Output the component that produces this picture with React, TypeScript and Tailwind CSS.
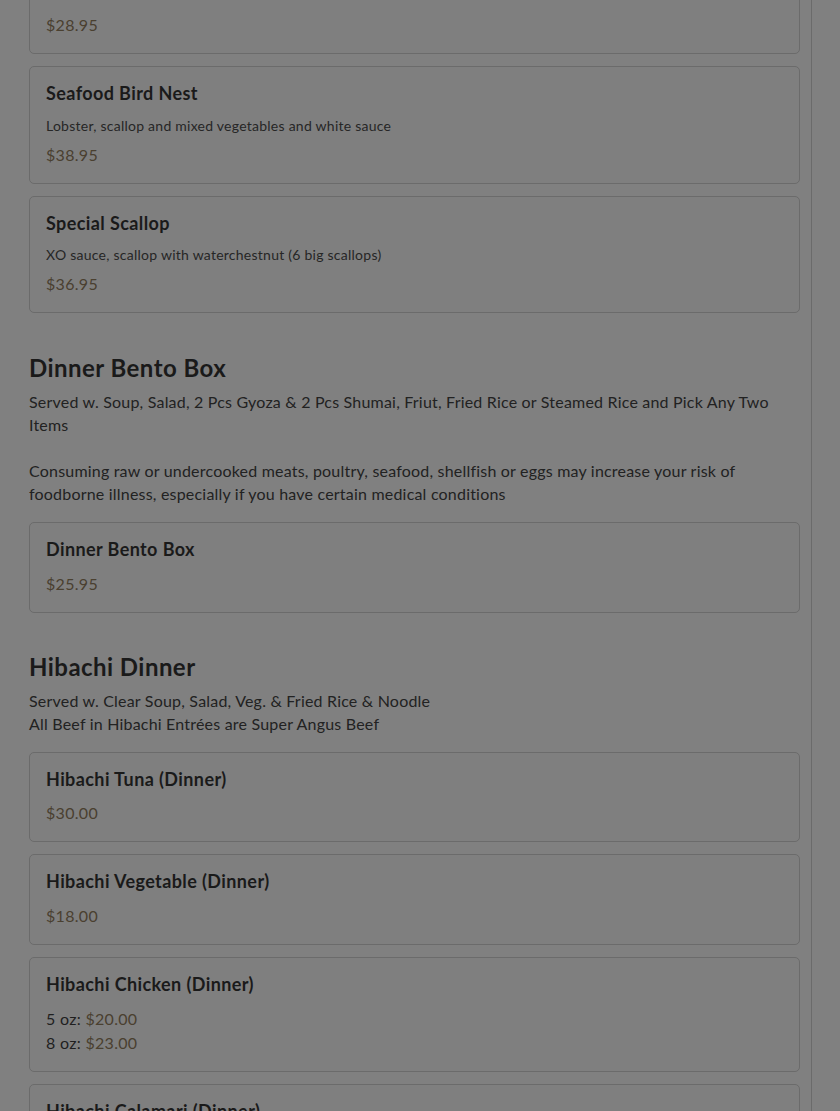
import React from "react";

type Item = { name: string; desc?: string; price?: string; sizes?: { label: string; price: string }[] };

const font = { fontFamily: "Lato, 'Noto Sans', sans-serif" };

function Card({ item }: { item: Item }) {
  return (
    <div className="rounded-[5px] border border-[#6b6b6b] bg-[#7f7f7f] px-4 py-4">
      <div className="mb-[11px] text-[18px] font-bold leading-[21.6px] tracking-[0.4px] text-[#1a1a1a]">{item.name}</div>
      {item.desc && <div className="mb-2 text-[14px] leading-[19px] tracking-[0.25px] text-[#262626]">{item.desc}</div>}
      {item.price && <div className="text-[16px] leading-6 tracking-[0.3px] text-[#4a4030]">{item.price}</div>}
      {item.sizes &&
        item.sizes.map((s) => (
          <div key={s.label} className="text-[16px] leading-6 tracking-[0.3px] text-[#1f1f1f]">
            {s.label}: <span className="text-[#4a4030]">{s.price}</span>
          </div>
        ))}
    </div>
  );
}

export default function App() {
  return (
    <div className="min-h-[1111px] w-full overflow-hidden bg-[#808080]" style={font}>
      <div className="w-[812px] border-r border-[#6b6b6b] pl-[29px] pr-[11px] min-h-[1111px]">
        <div className="-mt-[28px] flex flex-col gap-3">
          <div className="rounded-[5px] border border-[#6b6b6b] bg-[#7f7f7f] px-4 pt-[40px] pb-4">
            <div className="text-[16px] leading-6 tracking-[0.3px] text-[#4a4030]">$28.95</div>
          </div>
          <Card item={{ name: "Seafood Bird Nest", desc: "Lobster, scallop and mixed vegetables and white sauce", price: "$38.95" }} />
          <Card item={{ name: "Special Scallop", desc: "XO sauce, scallop with waterchestnut (6 big scallops)", price: "$36.95" }} />
        </div>

        <div className="mt-10">
          <h2 className="text-[24px] font-bold leading-[30px] tracking-[0.45px] text-[#1a1a1a]">Dinner Bento Box</h2>
          <div className="mt-[7px] max-w-[752px] text-[16px] leading-[23px] tracking-[0.2px] text-[#222]">
            <p>Served w. Soup, Salad, 2 Pcs Gyoza &amp; 2 Pcs Shumai, Friut, Fried Rice or Steamed Rice and Pick Any Two Items</p>
            <p className="mt-[23px]">
              Consuming raw or undercooked meats, poultry, seafood, shellfish or eggs may increase your risk of foodborne illness, especially if you have certain medical conditions
            </p>
          </div>
          <div className="mt-[17px] flex flex-col gap-3">
            <Card item={{ name: "Dinner Bento Box", price: "$25.95" }} />
          </div>
        </div>

        <div className="mt-[39px]">
          <h2 className="text-[24px] font-bold leading-[30px] tracking-[0.45px] text-[#1a1a1a]">Hibachi Dinner</h2>
          <div className="mt-[7px] text-[16px] leading-[23px] tracking-[0.2px] text-[#222]">
            <p>Served w. Clear Soup, Salad, Veg. &amp; Fried Rice &amp; Noodle</p>
            <p>All Beef in Hibachi Entrées are Super Angus Beef</p>
          </div>
          <div className="mt-[17px] flex flex-col gap-3">
            <Card item={{ name: "Hibachi Tuna (Dinner)", price: "$30.00" }} />
            <Card item={{ name: "Hibachi Vegetable (Dinner)", price: "$18.00" }} />
            <Card
              item={{
                name: "Hibachi Chicken (Dinner)",
                sizes: [
                  { label: "5 oz", price: "$20.00" },
                  { label: "8 oz", price: "$23.00" },
                ],
              }}
            />
            <Card item={{ name: "Hibachi Calamari (Dinner)", price: "$25.00" }} />
          </div>
        </div>
      </div>
    </div>
  );
}
